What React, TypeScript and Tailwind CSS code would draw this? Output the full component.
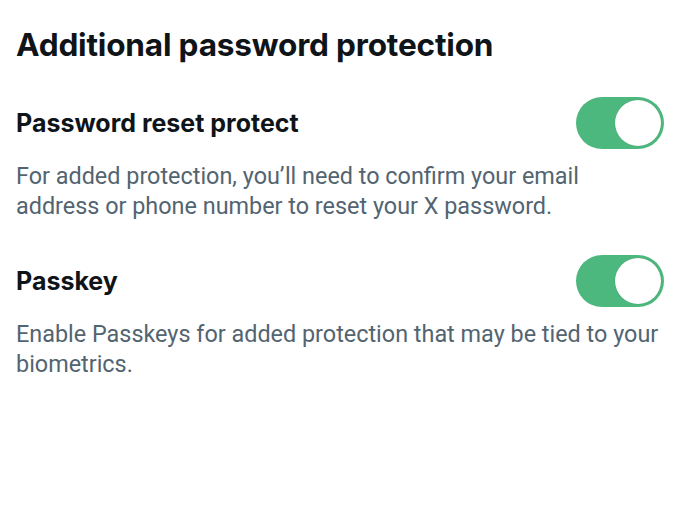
import React from 'react';

function Toggle() {
  return (
    <div className="flex h-[52px] w-[88px] shrink-0 items-center justify-end rounded-full bg-[#4db87d] p-[3px]">
      <div className="h-[46px] w-[46px] rounded-full bg-white shadow-[0_0_1px_rgba(0,0,0,0.25)]" />
    </div>
  );
}

const items = [
  {
    title: 'Password reset protect',
    desc: 'For added protection, you’ll need to confirm your email address or phone number to reset your X password.',
  },
  {
    title: 'Passkey',
    desc: 'Enable Passkeys for added protection that may be tied to your biometrics.',
  },
];

export default function App() {
  return (
    <div className="min-h-[532px] w-[680px] bg-white px-4 pt-[24px] text-[#0f1419]" style={{ fontFamily: 'Inter, sans-serif' }}>
      <h1 className="text-[31.6px] font-bold leading-[42px] tracking-[-0.2px]">Additional password protection</h1>
      <div className="mt-[31px] flex flex-col gap-[34px]">
        {items.map((it) => (
          <div key={it.title}>
            <div className="flex items-center justify-between">
              <h2 className="text-[25px] font-bold leading-[52px]">{it.title}</h2>
              <Toggle />
            </div>
            <p className="mt-[12px] max-w-[648px] text-[23.4px] leading-[30px] text-[#536471]" style={{ fontFamily: 'Roboto, sans-serif' }}>
              {it.desc}
            </p>
          </div>
        ))}
      </div>
    </div>
  );
}
